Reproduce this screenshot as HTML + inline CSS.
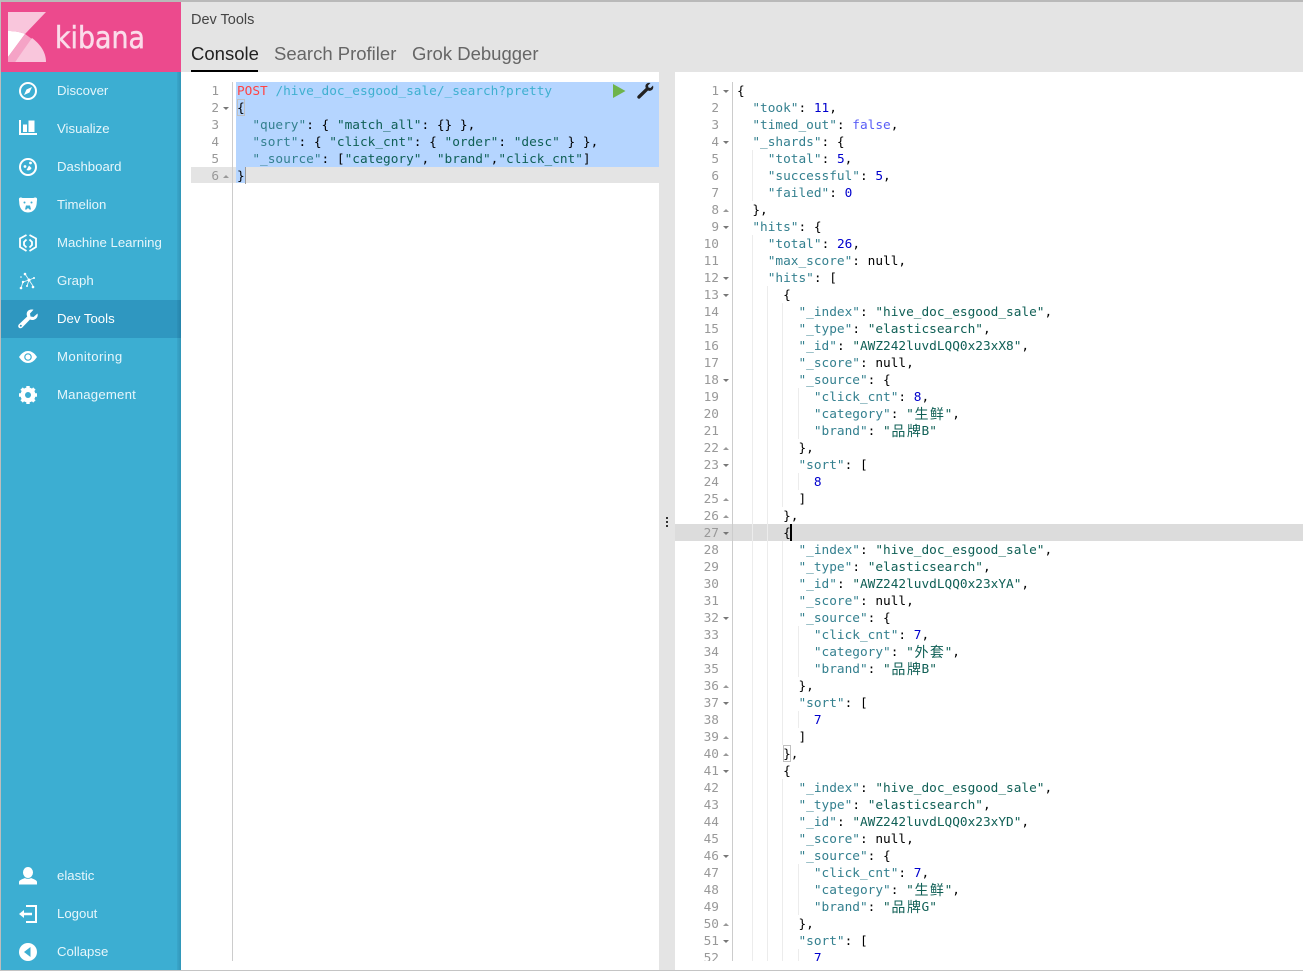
<!DOCTYPE html>
<html><head><meta charset="utf-8"><title>Dev Tools</title>
<style>
*{box-sizing:border-box}
html,body{margin:0;padding:0;width:1303px;height:971px;overflow:hidden;background:#fff;font-family:"Liberation Sans","Noto Sans CJK SC",sans-serif}
.a{position:absolute}
#side{left:1px;top:72px;width:180px;height:898px;background:#3caed2}
#shadow{left:177px;top:72px;width:4px;height:898px;background:linear-gradient(90deg,rgba(0,50,80,.06),rgba(0,50,80,.2))}
.nav{position:absolute;left:1px;width:176px;height:38px;color:#e6f6fb;font-size:13.2px;line-height:38px;padding-left:56px}
.nav.on{background:#2f97c0;color:#fff;width:180px}
.ic{position:absolute;left:18px;width:20px;height:20px}
.tab{position:absolute;top:42px;font-size:18.5px;line-height:24px;color:#666}
pre{margin:0;font-family:"DejaVu Sans Mono","Noto Sans CJK SC",monospace;font-size:12.78px;line-height:17px;color:#000}
pre i{font-style:normal;font-family:"Noto Sans CJK SC",sans-serif;font-size:14px;line-height:17px;display:inline-block;width:15.4px;height:17px;vertical-align:top;text-align:center;color:#0f5f55}
.g{position:absolute;text-align:right;color:#999;white-space:pre}
.g b{font-weight:normal;position:relative;display:block;height:17px}
.d:after,.u:after{content:"";position:absolute;right:-10px;top:7px;border-left:3px solid transparent;border-right:3px solid transparent}
.d:after{border-top:3px solid #777}
.u:after{border-bottom:3px solid #999}
.k{color:#34808f}.s{color:#0f5f55}.n{color:#0000cd}.f{color:#585cf6}
.v{position:absolute;width:1px;background:#ececec}
</style></head><body>
<div class="a" style="left:0;top:0;width:1303px;height:2px;background:#b9b9b9"></div>
<div class="a" style="left:0;top:0;width:1px;height:971px;background:#bdbdbd"></div>
<div class="a" style="left:181px;top:2px;width:1122px;height:70px;background:#e4e4e4"></div>
<div class="a" style="left:1px;top:2px;width:180px;height:70px;background:#ec4a8d"></div>
<svg class="a" style="left:0;top:0" width="181" height="72" viewBox="0 0 181 72">
<path d="M8 12H46L25 34C20 32 14 31 8 31Z" fill="#f9c6dc"/>
<path d="M8 31C14 31 20 32 25 34L8 57Z" fill="#fff"/>
<path d="M8 57L25 34 32 39 15 62H8Z" fill="#f5a3c6"/>
<path d="M15 62L32 38C40 44 46 52 46 62Z" fill="#f9c6dc"/>
<text x="55" y="48" font-family="'DejaVu Sans',sans-serif" font-size="30" fill="#fbdcea" stroke="#fbdcea" stroke-width=".5" textLength="90" lengthAdjust="spacingAndGlyphs">kibana</text>
</svg>
<div class="a" id="side"></div>
<div class="nav" style="top:72px">Discover</div>
<div class="nav" style="top:110px">Visualize</div>
<div class="nav" style="top:148px">Dashboard</div>
<div class="nav" style="top:186px">Timelion</div>
<div class="nav" style="top:224px">Machine Learning</div>
<div class="nav" style="top:262px">Graph</div>
<div class="nav on" style="top:300px;line-height:37px">Dev Tools</div>
<div class="nav" style="top:338px;letter-spacing:.4px">Monitoring</div>
<div class="nav" style="top:376px;letter-spacing:.2px">Management</div>
<div class="nav" style="top:857px">elastic</div>
<div class="nav" style="top:895px">Logout</div>
<div class="nav" style="top:933px">Collapse</div>
<div class="a" id="shadow"></div>

<svg class="ic" style="top:81px" viewBox="0 0 20 20"><circle cx="10" cy="10" r="8" fill="none" stroke="#fff" stroke-width="2"/><path d="M14 6L11.500 11.500 6 14 8.500 8.500Z" fill="#fff"/></svg>
<svg class="ic" style="top:118px" viewBox="0 0 20 20"><path d="M2 2V16H19" fill="none" stroke="#fff" stroke-width="2"/><path d="M5 6.500h4V14H5zM10.500 2.500h6V14h-6z" fill="#fff"/></svg>
<svg class="ic" style="top:157px" viewBox="0 0 20 20"><circle cx="10" cy="10" r="8" fill="none" stroke="#fff" stroke-width="2"/><circle cx="12.500" cy="6" r="1.400" fill="#fff"/><circle cx="7" cy="9.500" r="1.400" fill="#fff"/><path d="M8.500 13L11 8.500 13.500 11C13 13 10.500 14 8.500 13Z" fill="#fff"/></svg>
<svg class="ic" style="top:195px" viewBox="0 0 20 20"><path d="M1 3.500C1.500 2.200 3.500 2.200 4.500 3H15.500C16.500 2.200 18.500 2.200 19 3.500 19.200 5 18.800 6 18.800 7 18.800 13 15.500 17.500 10 17.500S1.200 13 1.200 7C1.200 6 .8 5 1 3.500Z" fill="#fff"/><circle cx="6.500" cy="7.500" r="1" fill="#3caed2"/><circle cx="13.500" cy="7.500" r="1" fill="#3caed2"/><path d="M7 14.500L8 10.500H12L13 14.500H11.500L10 13 8.500 14.500Z" fill="#3caed2"/></svg>
<svg class="ic" style="top:233px" viewBox="0 0 20 20"><g fill="none" stroke="#fff" stroke-width="1.800"><path d="M8.500 2L2 5.500V14L8.500 18"/><path d="M11.500 2L18 5.500V14L11.500 18"/><path d="M8.500 6.500L6 9V12L8.500 14.500"/><path d="M11.500 6.500L14 9V12L11.500 14.500"/></g></svg>
<svg class="ic" style="top:271px" viewBox="0 0 20 20"><g stroke="#fff" stroke-width=".9" fill="none" opacity=".9"><path d="M7 3L11 9 16 7M11 9L5 11 3 17M11 9L15 15M11 9L9 15"/></g><g fill="#fff"><circle cx="7" cy="3" r="1.300"/><circle cx="11" cy="9" r="1.500"/><circle cx="16" cy="7" r="1"/><circle cx="5" cy="11" r="1.200"/><circle cx="3" cy="17" r="1.300"/><circle cx="15" cy="16" r="1.300"/><circle cx="9" cy="15" r="1"/><circle cx="3" cy="6" r=".8"/></g></svg>
<svg class="ic" style="top:309px" viewBox="0 0 20 20"><path d="M19.500 4.500L15.500 8 12.500 7.500 12 4.500 15.500 .8C12.500 0 9.500 1.200 8.800 4 8.500 5.500 8.800 6.500 9.200 7.500L.8 15.500C0 16.500 0 17.800 .8 18.600S3 19.500 4 18.700L12 10.500C13 11 14.500 11.200 16 10.700 18.800 9.800 20.300 7.300 19.500 4.500Z" fill="#fff"/><circle cx="2.800" cy="16.800" r="1" fill="#2f97c0"/></svg>
<svg class="ic" style="top:347px" viewBox="0 0 20 20"><path d="M1 10C4 5.500 7 4 10 4S16 5.500 19 10C16 14.500 13 16 10 16S4 14.500 1 10Z" fill="#fff"/><circle cx="10" cy="10" r="3.800" fill="#3caed2"/><circle cx="10" cy="10" r="2.600" fill="#fff"/></svg>
<svg class="ic" style="top:385px" viewBox="0 0 20 20"><circle cx="10" cy="10" r="5.500" fill="none" stroke="#fff" stroke-width="4"/><g stroke="#fff" stroke-width="3.400"><path d="M10 1V19M1 10H19M3.600 3.600L16.400 16.400M16.400 3.600L3.600 16.400"/></g><circle cx="10" cy="10" r="3" fill="#3caed2"/></svg>
<svg class="ic" style="top:866px" viewBox="0 0 20 20"><ellipse cx="10" cy="6.500" rx="5" ry="5.500" fill="#fff"/><path d="M1 18.500V16C1 14 5 13 7 12 8 13 12 13 13 12 15 13 19 14 19 16V18.500Z" fill="#fff"/></svg>
<svg class="ic" style="top:904px" viewBox="0 0 20 20"><path d="M8 2H18V18H8" fill="none" stroke="#fff" stroke-width="2"/><path d="M1 10L6 6V8.700H14V11.300H6V14Z" fill="#fff"/></svg>
<svg class="ic" style="top:942px" viewBox="0 0 20 20"><circle cx="10" cy="10" r="9" fill="#fff"/><path d="M12.500 5V15L6 10Z" fill="#3caed2"/></svg>

<div class="a" style="left:191px;top:11px;font-size:14.5px;line-height:18px;color:#444">Dev Tools</div>
<div class="tab" style="left:191px;color:#222">Console</div>
<div class="tab" style="left:274px">Search Profiler</div>
<div class="tab" style="left:412px">Grok Debugger</div>
<div class="a" style="left:191px;top:70px;width:67px;height:2px;background:#000"></div>

<!-- left editor -->
<div class="a" style="left:191px;top:167px;width:468px;height:16px;background:#e4e4e4"></div>
<div class="a" style="left:236px;top:82px;width:423px;height:85px;background:#b5d5ff"></div>
<div class="a" style="left:236px;top:167px;width:10px;height:16px;background:#b5d5ff"></div>
<div class="a" style="left:232px;top:82px;width:1px;height:879px;background:#ccc"></div>
<div class="a" style="left:237px;top:99px;width:8px;height:17px;border:1px solid #c0c0c0"></div>
<div class="a" style="left:245px;top:167px;width:1px;height:17px;background:#999"></div>
<pre class="g" style="left:191px;top:83px;width:28px">
<b>1</b><b class="d">2</b><b>3</b><b>4</b><b>5</b><b class="u">6</b></pre>
<pre class="a" style="left:237px;top:83px"><span style="color:#f44">POST</span> <span style="color:#3fb0d0">/hive_doc_esgood_sale/_search?pretty</span>
{
  <span class="k">"query"</span>: { <span class="s">"match_all"</span>: {} },
  <span class="k">"sort"</span>: { <span class="s">"click_cnt"</span>: { <span class="s">"order"</span>: <span class="s">"desc"</span> } },
  <span class="k">"_source"</span>: [<span class="s">"category"</span>, <span class="s">"brand"</span>,<span class="s">"click_cnt"</span>]
}</pre>
<svg class="a" style="left:610px;top:82px" width="46" height="18" viewBox="0 0 46 18"><path d="M3 2L15.500 9 3 16Z" fill="#6eb44c"/><path d="M43 3.500L40.500 6 38.500 5.500 38 3.500 40.500 1C38 .5 36 1.500 35.500 3.500 35.300 4.500 35.500 5.500 35.800 6L28 13.500C27 14.500 27 15.500 27.800 16.200S29.500 17 30.300 16L38 8.500C39 9 40 9 41 8.500 43 7.800 43.700 5.700 43 3.500Z" fill="#222"/></svg>

<!-- divider -->
<div class="a" style="left:659px;top:72px;width:16px;height:898px;background:#e4e4e4"></div>
<div class="a" style="left:666px;top:517px;width:2px;height:2px;background:#333;box-shadow:0 4px #333,0 8px #333"></div>

<!-- right editor -->
<div class="a" style="left:675px;top:524px;width:628px;height:17px;background:#dcdcdc"></div>
<div class="a" style="left:732px;top:82px;width:1px;height:879px;background:#ccc"></div>
<div class="v" style="left:752px;top:150px;height:51px"></div>
<div class="v" style="left:752px;top:235px;height:726px"></div>
<div class="v" style="left:767px;top:286px;height:675px"></div>
<div class="v" style="left:782px;top:303px;height:204px"></div>
<div class="v" style="left:782px;top:541px;height:204px"></div>
<div class="v" style="left:782px;top:779px;height:182px"></div>
<div class="v" style="left:798px;top:388px;height:51px"></div>
<div class="v" style="left:798px;top:473px;height:17px"></div>
<div class="v" style="left:798px;top:626px;height:51px"></div>
<div class="v" style="left:798px;top:711px;height:17px"></div>
<div class="v" style="left:798px;top:864px;height:51px"></div>
<div class="v" style="left:798px;top:949px;height:12px"></div>
<div class="a" style="left:783px;top:745px;width:8px;height:17px;border:1px solid #c0c0c0"></div>
<div class="a" style="left:790px;top:524px;width:2px;height:17px;background:#000"></div>
<div class="a" style="left:675px;top:82px;width:628px;height:879px;overflow:hidden">
<pre class="g" style="left:0;top:1px;width:44px"><b class="d">1</b><b>2</b><b>3</b><b class="d">4</b><b>5</b><b>6</b><b>7</b><b class="u">8</b><b class="d">9</b><b>10</b><b>11</b><b class="d">12</b><b class="d">13</b><b>14</b><b>15</b><b>16</b><b>17</b><b class="d">18</b><b>19</b><b>20</b><b>21</b><b class="u">22</b><b class="d">23</b><b>24</b><b class="u">25</b><b class="u">26</b><b class="d">27</b><b>28</b><b>29</b><b>30</b><b>31</b><b class="d">32</b><b>33</b><b>34</b><b>35</b><b class="u">36</b><b class="d">37</b><b>38</b><b class="u">39</b><b class="u">40</b><b class="d">41</b><b>42</b><b>43</b><b>44</b><b>45</b><b class="d">46</b><b>47</b><b>48</b><b>49</b><b class="u">50</b><b class="d">51</b><b>52</b></pre>
<pre class="a" style="left:62px;top:1px">{
  <span class="k">"took"</span>: <span class="n">11</span>,
  <span class="k">"timed_out"</span>: <span class="f">false</span>,
  <span class="k">"_shards"</span>: {
    <span class="k">"total"</span>: <span class="n">5</span>,
    <span class="k">"successful"</span>: <span class="n">5</span>,
    <span class="k">"failed"</span>: <span class="n">0</span>
  },
  <span class="k">"hits"</span>: {
    <span class="k">"total"</span>: <span class="n">26</span>,
    <span class="k">"max_score"</span>: null,
    <span class="k">"hits"</span>: [
      {
        <span class="k">"_index"</span>: <span class="s">"hive_doc_esgood_sale"</span>,
        <span class="k">"_type"</span>: <span class="s">"elasticsearch"</span>,
        <span class="k">"_id"</span>: <span class="s">"AWZ242luvdLQQ0x23xX8"</span>,
        <span class="k">"_score"</span>: null,
        <span class="k">"_source"</span>: {
          <span class="k">"click_cnt"</span>: <span class="n">8</span>,
          <span class="k">"category"</span>: <span class="s">"<i>生</i><i>鲜</i>"</span>,
          <span class="k">"brand"</span>: <span class="s">"<i>品</i><i>牌</i>B"</span>
        },
        <span class="k">"sort"</span>: [
          <span class="n">8</span>
        ]
      },
      {
        <span class="k">"_index"</span>: <span class="s">"hive_doc_esgood_sale"</span>,
        <span class="k">"_type"</span>: <span class="s">"elasticsearch"</span>,
        <span class="k">"_id"</span>: <span class="s">"AWZ242luvdLQQ0x23xYA"</span>,
        <span class="k">"_score"</span>: null,
        <span class="k">"_source"</span>: {
          <span class="k">"click_cnt"</span>: <span class="n">7</span>,
          <span class="k">"category"</span>: <span class="s">"<i>外</i><i>套</i>"</span>,
          <span class="k">"brand"</span>: <span class="s">"<i>品</i><i>牌</i>B"</span>
        },
        <span class="k">"sort"</span>: [
          <span class="n">7</span>
        ]
      },
      {
        <span class="k">"_index"</span>: <span class="s">"hive_doc_esgood_sale"</span>,
        <span class="k">"_type"</span>: <span class="s">"elasticsearch"</span>,
        <span class="k">"_id"</span>: <span class="s">"AWZ242luvdLQQ0x23xYD"</span>,
        <span class="k">"_score"</span>: null,
        <span class="k">"_source"</span>: {
          <span class="k">"click_cnt"</span>: <span class="n">7</span>,
          <span class="k">"category"</span>: <span class="s">"<i>生</i><i>鲜</i>"</span>,
          <span class="k">"brand"</span>: <span class="s">"<i>品</i><i>牌</i>G"</span>
        },
        <span class="k">"sort"</span>: [
          <span class="n">7</span></pre>
</div>
<div class="a" style="left:0;top:970px;width:1303px;height:1px;background:#c4c4c4"></div>
</body></html>
